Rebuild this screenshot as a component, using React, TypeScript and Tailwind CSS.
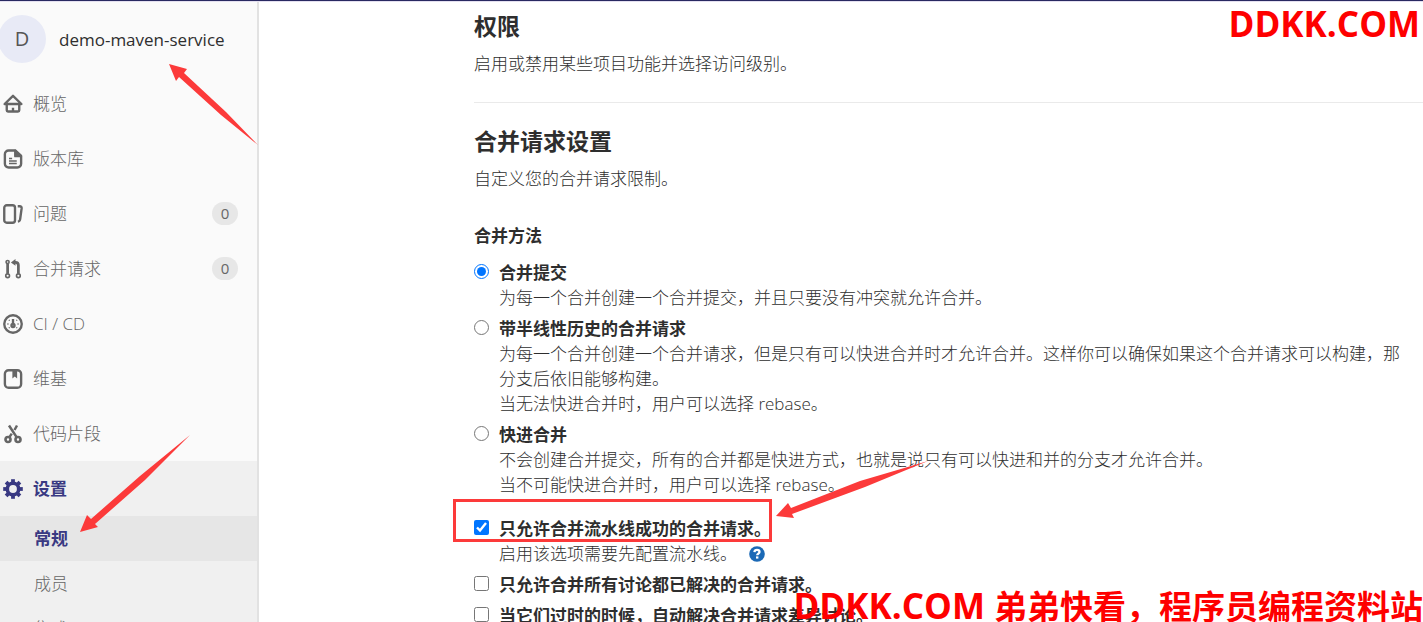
import type { ReactNode } from 'react';

const icons: Record<string, ReactNode> = {
  home: (
    <>
      <path d="M1.300 8 8 1.500 14.700 8z" />
      <path d="M3 8.200v4.800c0 .6.4 1 1 1h8c.6 0 1-.4 1-1V8.200M8 11v2.600" />
    </>
  ),
  doc: (
    <>
      <path d="M10 1.200H4.500a3 3 0 0 0-3 3v7.600a3 3 0 0 0 3 3h7a3 3 0 0 0 3-3V5.500z" />
      <path d="M9.800 1.500v4.200h4.500z" fill="currentColor" />
      <path d="M4.800 7.600h2.500M4.800 9.600h6.200M4.800 11.600h6.200" strokeWidth="1.100" />
    </>
  ),
  issues: (
    <>
      <rect x="1" y="1" width="8.600" height="14" rx="2" />
      <path d="M11.800 1.800h1.600c1 0 1.600.7 1.500 1.700l-1.200 8.700c-.1 1-.7 1.700-1.800 1.900" />
    </>
  ),
  merge: (
    <>
      <circle cx="3.700" cy="2.400" r="1.200" strokeWidth="1.300" />
      <circle cx="3.700" cy="13.400" r="1.500" strokeWidth="1.300" />
      <circle cx="12.300" cy="13.400" r="1.500" strokeWidth="1.300" />
      <path d="M3.700 4v7.700M12.300 11.700V5c0-1.400-.8-2.300-2.300-2.300H8.800" strokeWidth="2.200" />
      <path d="M10 0v5.400L6.300 2.700z" fill="currentColor" stroke="none" />
    </>
  ),
  gauge: (
    <>
      <circle cx="8" cy="8" r="7" />
      <circle cx="8" cy="9.200" r="1.200" />
      <path d="M8 4v3.500" />
      <path d="M3.500 8h.9M11.600 8h.9M4.700 4.700l.6.600M11.300 4.700l-.6.600M4.700 11.300l.6-.6M11.300 11.300l-.6-.6" strokeWidth="1.100" />
    </>
  ),
  wiki: (
    <>
      <rect x="1.500" y="1" width="13" height="14" rx="3" />
      <path d="M7.500 1.500v6l1.900-1.600 1.900 1.600v-6z" fill="currentColor" stroke="none" />
    </>
  ),
  snippet: (
    <>
      <circle cx="4" cy="12.400" r="2" strokeWidth="2.100" />
      <circle cx="12" cy="12.400" r="2" strokeWidth="2.100" />
      <path d="M4.800 1.200 11 10.700M5 10.700l2-3M11.200 1.200 9.200 4.800" strokeWidth="2" />
    </>
  ),
};

interface NavItem {
  icon: string;
  label: string;
  count?: number;
}

const navItems: NavItem[] = [
  { icon: 'home', label: '概览' },
  { icon: 'doc', label: '版本库' },
  { icon: 'issues', label: '问题', count: 0 },
  { icon: 'merge', label: '合并请求', count: 0 },
  { icon: 'gauge', label: 'CI / CD' },
  { icon: 'wiki', label: '维基' },
  { icon: 'snippet', label: '代码片段' },
];

const mergeMethods = [
  { id: 'merge', title: '合并提交', lines: ['为每一个合并创建一个合并提交，并且只要没有冲突就允许合并。'] },
  {
    id: 'rebase_merge',
    title: '带半线性历史的合并请求',
    lines: [
      '为每一个合并创建一个合并请求，但是只有可以快进合并时才允许合并。这样你可以确保如果这个合并请求可以构建，那',
      '分支后依旧能够构建。',
      '当无法快进合并时，用户可以选择 rebase。',
    ],
  },
  {
    id: 'ff',
    title: '快进合并',
    lines: [
      '不会创建合并提交，所有的合并都是快进方式，也就是说只有可以快进和并的分支才允许合并。',
      '当不可能快进合并时，用户可以选择 rebase。',
    ],
  },
];

function NavIcon({ name }: { name: string }) {
  return (
    <svg viewBox="0 0 16 16" className="h-5 w-5 shrink-0" fill="none" stroke="currentColor" strokeWidth="1.900" strokeLinejoin="round">
      {icons[name]}
    </svg>
  );
}

function GearIcon() {
  return (
    <svg viewBox="0 0 20 20" className="h-5 w-5 shrink-0" fill="none" stroke="currentColor">
      <circle cx="10" cy="10" r="5.700" strokeWidth="3.600" />
      <g strokeWidth="3.800">
        {[0, 45, 90, 135, 180, 225, 270, 315].map((a) => (
          <path key={a} d="M10 3.500V.2" transform={`rotate(${a} 10 10)`} />
        ))}
      </g>
    </svg>
  );
}

function Sidebar() {
  return (
    <aside className="w-[259px] shrink-0 border-r-2 border-[#e2e2e2] bg-[#fafafa] font-light text-[#666]">
      <a href="#project" className="flex h-[74px] items-center text-[#2e2e2e]">
        <span className="-ml-0.5 flex h-12 w-12 items-center justify-center rounded-full bg-[#e8eaf6] text-xl font-medium text-[#555]">
          D
        </span>
        <span className="ml-[13px] text-[17px] font-medium">demo-maven-service</span>
      </a>
      <nav>
        {navItems.map((item) => (
          <a key={item.label} href={`#${item.icon}`} className="flex h-[55px] items-center pr-[19px] pl-[3px]">
            <NavIcon name={item.icon} />
            <span className="ml-2.5">{item.label}</span>
            {item.count !== undefined && (
              <span className="ml-auto flex h-[23px] w-[26px] items-center justify-center rounded-full bg-[#e7e7e7] text-[15px] font-normal">
                {item.count}
              </span>
            )}
          </a>
        ))}
        <div className="bg-[#f0f0f0]">
          <a href="#settings" className="flex h-[55px] items-center pl-[3px] font-bold text-[#393982]">
            <GearIcon />
            <span className="ml-2.5">设置</span>
          </a>
          <a href="#general" className="flex h-[45px] items-center bg-[#e6e6e6] pl-[34px] font-bold text-[#393982]">
            常规
          </a>
          <a href="#members" className="flex h-[45px] items-center pl-[34px]">
            成员
          </a>
          <a href="#integrations" className="flex h-[45px] items-center pl-[34px]">
            集成
          </a>
        </div>
      </nav>
    </aside>
  );
}

function HelpLink() {
  return (
    <a href="#help" aria-label="帮助" className="ml-3 text-[#1b69b6]">
      <svg viewBox="0 0 16 16" className="h-4 w-4">
        <circle cx="8" cy="8" r="7.800" fill="currentColor" />
        <path d="M5.400 6.200c.2-1.600 1.200-2.300 2.600-2.300 1.500 0 2.500.8 2.500 2 0 1.700-2.300 1.700-2.300 3.400" fill="none" stroke="#fff" strokeWidth="2.300" />
        <path d="M7 10.400h2.400v2.200H7z" fill="#fff" />
      </svg>
    </a>
  );
}

function Check({ id, label, checked, children }: { id: string; label: string; checked?: boolean; children?: ReactNode }) {
  return (
    <div className="mb-1.5 flex items-start">
      <input id={id} type="checkbox" defaultChecked={checked} className="mt-1 mr-2.5 h-[15px] w-[15px] shrink-0 accent-[#0075ff]" />
      <div>
        <label htmlFor={id} className="block font-bold">
          {label}
        </label>
        {children}
      </div>
    </div>
  );
}

export default function App() {
  return (
    <div className="relative flex h-screen flex-col overflow-hidden bg-white font-['Open_Sans','Noto_Sans_CJK_SC',sans-serif] text-[17px] leading-[25px] text-[#2e2e2e]">
      <div className="h-0.5 shrink-0 border-b border-[#e4e0f0] bg-[#292961]" />
      <div className="flex min-h-0 flex-1">
        <Sidebar />
        <main className="min-w-0 flex-1 overflow-hidden pl-[215px] font-light whitespace-nowrap">
          <section className="border-b border-[#eaeaea] pt-2.5 pb-[26px]">
            <h4 className="mb-2.5 text-[23px] leading-[29px] font-bold">权限</h4>
            <p>启用或禁用某些项目功能并选择访问级别。</p>
          </section>
          <section className="pt-6">
            <h4 className="mb-2.5 text-[23px] leading-[29px] font-bold">合并请求设置</h4>
            <p>自定义您的合并请求限制。</p>
            <fieldset className="mt-8 mb-[13px]">
              <legend className="mb-3 font-bold">合并方法</legend>
              {mergeMethods.map((m) => (
                <div key={m.id} className="mb-1.5 flex items-start">
                  <input
                    id={m.id}
                    type="radio"
                    name="merge_method"
                    defaultChecked={m.id === 'merge'}
                    className="mt-1 mr-2.5 h-[15px] w-[15px] shrink-0 accent-[#0075ff]"
                  />
                  <div>
                    <label htmlFor={m.id} className="block font-bold">
                      {m.title}
                    </label>
                    {m.lines.map((line) => (
                      <p key={line}>{line}</p>
                    ))}
                  </div>
                </div>
              ))}
            </fieldset>
            <Check id="pipeline" label="只允许合并流水线成功的合并请求。" checked>
              <p className="flex items-center">
                启用该选项需要先配置流水线。
                <HelpLink />
              </p>
            </Check>
            <Check id="discussions" label="只允许合并所有讨论都已解决的合并请求。" />
            <Check id="outdated" label="当它们过时的时候，自动解决合并请求差异讨论。" />
          </section>
        </main>
      </div>

      {/* red marks drawn over the page */}
      <div className="pointer-events-none absolute top-[499px] left-[453px] h-[43px] w-[319px] border-3 border-[#fc3a3a]" />
      <svg className="pointer-events-none absolute top-0 left-0" width="1000" height="622" fill="#fc3a3a">
        <path d="M169 64 187 69 184 73 226 112 258 145 221 115 179 77 176 81z" />
        <path d="M80 532 87 515 91 519 140 476 190 435 145 480 95 524 98 527z" />
        <path d="M776 516 788 503 791 508 860 481 928 461 865 487 792 514 794 518z" />
      </svg>
      <span className="pointer-events-none absolute top-0 right-[3px] text-[35px] leading-[48px] font-bold text-[#fe0000]">
        DDKK.COM
      </span>
      <span className="pointer-events-none absolute right-0 bottom-[-9px] flex items-baseline text-[33px] leading-[48px] font-bold whitespace-pre text-[#fe0000]">
        <span className="text-[35px]">DDKK.COM </span>
        弟弟快看，程序员编程资料站
      </span>
    </div>
  );
}
